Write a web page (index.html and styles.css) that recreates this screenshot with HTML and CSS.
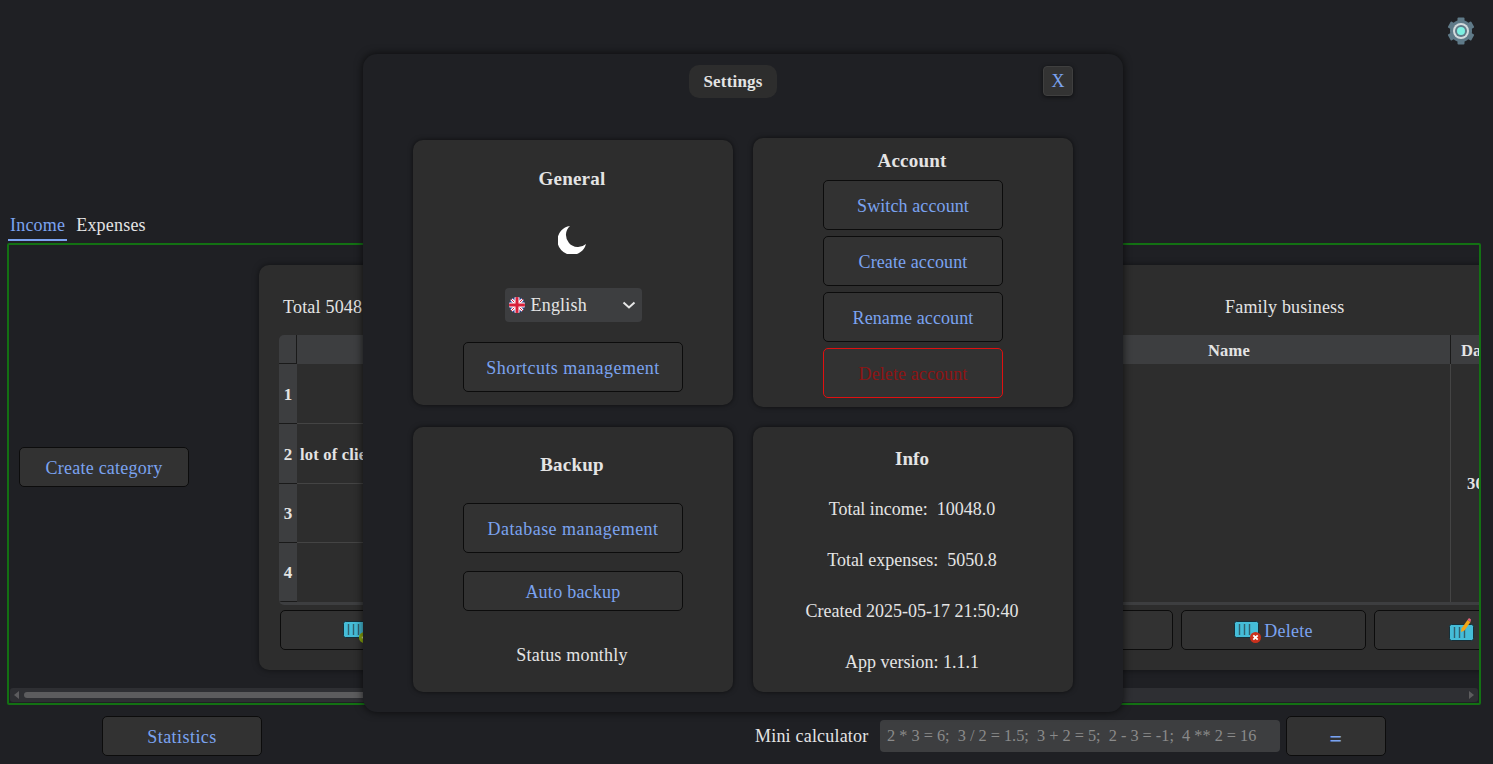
FILE: index.html
```html
<!DOCTYPE html>
<html lang="en">
<head>
  <meta charset="UTF-8" />
  <title>Finance | Settings</title>
  <link rel="stylesheet" href="styles.css">
</head>
<body>

  <svg width="0" height="0" class="defs">
    <symbol id="tbl" viewBox="0 0 25 17">
      <rect x="0.500" y="0.500" width="24" height="16" rx="2" fill="#45bdd8" stroke="#15303a"/>
      <path d="M5.500 3v11M10.500 3v11M15.500 3v11" stroke="#31606e" stroke-width="1.400"/>
    </symbol>
  </svg>

  <!-- Top -->
  <div class="top">
    <svg class="gear" viewBox="0 0 28 28">
      <g fill="#5f7a88">
        <circle cx="14" cy="14" r="11"/>
        <rect x="10.500" y="0.500" width="7" height="6" rx="1"/>
        <rect x="10.500" y="0.500" width="7" height="6" rx="1" transform="rotate(60 14 14)"/>
        <rect x="10.500" y="0.500" width="7" height="6" rx="1" transform="rotate(120 14 14)"/>
        <rect x="10.500" y="0.500" width="7" height="6" rx="1" transform="rotate(180 14 14)"/>
        <rect x="10.500" y="0.500" width="7" height="6" rx="1" transform="rotate(240 14 14)"/>
        <rect x="10.500" y="0.500" width="7" height="6" rx="1" transform="rotate(300 14 14)"/>
      </g>
      <circle cx="14" cy="14" r="8" fill="#d3dadd"/>
      <circle cx="14" cy="14" r="6" fill="#5f7a88"/>
      <circle cx="14" cy="14" r="4" fill="#7df0e2"/>
    </svg>
  </div>

  <!-- Tabs -->
  <div class="tabs">
    <span class="tab active">Income</span>
    <span class="tab">Expenses</span>
  </div>

  <!-- Main frame -->
  <div class="frame">
    <div class="frame-inner">
      <div class="side">
        <button class="btn create-btn">Create category</button>
      </div>
      <div class="card">
        <div class="card-head">
          <span class="total">Total 5048</span>
          <span class="card-name">Family business</span>
        </div>
        <div class="table">
          <div class="corner"></div>
          <div class="th">Description</div>
          <div class="th">Name</div>
          <div class="th th-date">Date</div>

          <div class="rowhead">1</div>
          <div class="td"></div>
          <div class="td td-name"></div>
          <div class="td td-date">30</div>

          <div class="rowhead">2</div>
          <div class="td td-left">lot of clients</div>

          <div class="rowhead">3</div>
          <div class="td"></div>

          <div class="rowhead">4</div>
          <div class="td last"></div>
        </div>
        <div class="actions">
          <button class="btn act act-add">
            <span class="ic"><svg width="25" height="17"><use href="#tbl"/></svg><svg class="badge" viewBox="0 0 10 10"><circle cx="5" cy="5" r="5" fill="#8aa80c"/><path d="M2.500 5h5" stroke="#dfe8a0" stroke-width="1.600"/></svg></span>
          </button>
          <button class="btn act act-mid"></button>
          <button class="btn act">
            <span class="ic"><svg width="25" height="17"><use href="#tbl"/></svg><svg class="badge" viewBox="0 0 10 10"><circle cx="5" cy="5" r="5" fill="#c9301c"/><path d="M3 3l4 4M7 3l-4 4" stroke="#fff" stroke-width="1.600"/></svg></span>
            Delete
          </button>
          <button class="btn act act-edit">
            <span class="ic ic-edit"><svg width="25" height="17"><use href="#tbl"/></svg><svg class="pencil" viewBox="0 0 11 15"><path d="M1 14l.5-3.500 6-8.500 3 2-6 8.500z" fill="#f2a516"/><path d="M7.500 2L9 0l2 1.500L10.500 4z" fill="#e8677a"/></svg></span>
          </button>
        </div>
      </div>
    </div>
    <div class="hscroll">
      <span class="arrow-left"></span>
      <div class="thumb"></div>
      <span class="arrow-right"></span>
    </div>
  </div>

  <!-- Bottom row -->
  <div class="bottom">
    <button class="btn stats-btn">Statistics</button>
    <div class="calc">
      <span class="calc-label">Mini calculator</span>
      <input class="calc-input" type="text" placeholder="2 * 3 = 6;  3 / 2 = 1.5;  3 + 2 = 5;  2 - 3 = -1;  4 ** 2 = 16">
      <button class="btn eq-btn">=</button>
    </div>
  </div>

  <!-- Settings modal -->
  <div class="modal">
    <div class="modal-head">
      <span class="modal-title">Settings</span>
      <button class="close-btn">X</button>
    </div>
    <div class="panels">
      <section class="panel panel-general">
        <h3>General</h3>
        <svg class="moon" viewBox="0 0 28 28"><path d="M12 0A14.500 14.500 0 1 0 28 18 12 12 0 0 1 12 0z" fill="#fff"/></svg>
        <div class="lang">
          <svg class="flag" viewBox="0 0 16 16">
            <defs><clipPath id="round"><circle cx="8" cy="8" r="8"/></clipPath></defs>
            <g clip-path="url(#round)">
              <rect width="16" height="16" fill="#2a3f8f"/>
              <path d="M0 0l16 16M16 0L0 16" stroke="#fff" stroke-width="3"/>
              <path d="M0 0l16 16M16 0L0 16" stroke="#d8203a" stroke-width="1"/>
              <path d="M8 0v16M0 8h16" stroke="#fff" stroke-width="5"/>
              <path d="M8 0v16M0 8h16" stroke="#d8203a" stroke-width="3"/>
            </g>
          </svg>
          <span>English</span>
          <svg class="chev" viewBox="0 0 14 8"><path d="M1.500 1.500L7 6.500l5.500-5" fill="none" stroke="#e6e6e6" stroke-width="2"/></svg>
        </div>
        <button class="btn wide tall">Shortcuts management</button>
      </section>

      <section class="panel panel-account">
        <h3>Account</h3>
        <button class="btn acc">Switch account</button>
        <button class="btn acc">Create account</button>
        <button class="btn acc">Rename account</button>
        <button class="btn acc danger">Delete account</button>
      </section>

      <section class="panel panel-backup">
        <h3>Backup</h3>
        <button class="btn wide tall">Database management</button>
        <button class="btn wide auto">Auto backup</button>
        <p class="status">Status monthly</p>
      </section>

      <section class="panel panel-info">
        <h3>Info</h3>
        <p>Total income:&nbsp; 10048.0</p>
        <p>Total expenses:&nbsp; 5050.8</p>
        <p>Created 2025-05-17 21:50:40</p>
        <p>App version: 1.1.1</p>
      </section>
    </div>
  </div>

</body>
</html>
```

FILE: styles.css
```css
* {
  box-sizing: border-box;
}

html, body {
  height: 100%;
}

body {
  margin: 0;
  padding: 0 12px 0 8px;
  background: #1f2024;
  color: #e4e4e4;
  font-family: "Liberation Serif", serif;
  font-size: 18px;
  letter-spacing: 0.2px;
  overflow: hidden;
  position: relative;
}

.defs {
  position: absolute;
}

/* Top */
.top {
  height: 216px;
  display: flex;
  justify-content: flex-end;
  padding: 17px 6px 0 0;
}

.gear {
  width: 28px;
  height: 28px;
}

/* Tabs */
.tabs {
  display: flex;
  height: 25px;
  gap: 7px;
}

.tab {
  padding: 0 2px;
  height: 25px;
  line-height: 19px;
}

.tab.active {
  color: #7ba3f0;
  border-bottom: 2px solid #7ba3f0;
}

/* Frame */
.frame {
  margin: 2px 0 0 -1px;
  height: 462px;
  border: 2px solid #137113;
  border-radius: 2px;
  display: flex;
  flex-direction: column;
  overflow: hidden;
}

.frame-inner {
  flex: 1;
  display: flex;
  overflow: hidden;
  min-height: 0;
}

.side {
  width: 250px;
  flex: none;
  display: flex;
  align-items: center;
  padding: 1px 0 0 10px;
}

.btn {
  background: #323232;
  color: #7ba3f0;
  border: 1px solid #0c0c0c;
  border-radius: 5px;
  font-family: inherit;
  font-size: 18px;
  letter-spacing: 0.25px;
  padding: 2px 0 0;
}

.create-btn {
  width: 170px;
  height: 40px;
}

.card {
  flex: none;
  width: 1400px;
  height: 405px;
  margin-top: 20px;
  background: #2d2d2d;
  border-radius: 10px;
  box-shadow: 0 0 6px rgba(0, 0, 0, 0.5);
  padding: 0 20px;
}

.card-head {
  height: 70px;
  display: flex;
  align-items: center;
  padding: 14px 0 0 4px;
}

.total {
  width: 942px;
}

.table {
  display: grid;
  grid-template-columns: 18px 711px 442px 120px;
  grid-template-rows: 29px 60px 60px 59px 59px;
  border-radius: 5px;
  overflow: hidden;
  border-bottom: 3px solid #3d3e40;
}

.corner, .th {
  background: #3d3e40;
  font-weight: bold;
  font-size: 16.5px;
  padding-top: 2px;
  display: flex;
  align-items: center;
  justify-content: center;
}

.corner {
  border-right: 1px solid #1a1a1a;
  border-bottom: 1px solid #1a1a1a;
}

.th-date {
  border-left: 1px solid #1a1a1a;
  justify-content: flex-start;
  padding-left: 10px;
}

.rowhead {
  background: #3d3e40;
  border-bottom: 1px solid #1a1a1a;
  padding-top: 2px;
  display: flex;
  align-items: center;
  justify-content: center;
  font-weight: bold;
  font-size: 17px;
}

.td {
  border-bottom: 1px solid #444;
  padding-top: 2px;
  display: flex;
  align-items: center;
  justify-content: center;
  font-weight: bold;
  font-size: 16.5px;
}

.td.last {
  border-bottom: none;
}

.td-left {
  justify-content: flex-start;
  padding-left: 3px;
}

.td-name {
  grid-column: 3;
  grid-row: 2 / 6;
  border-bottom: none;
}

.td-date {
  grid-column: 4;
  grid-row: 2 / 6;
  border-left: 1px solid #444;
  border-bottom: none;
  justify-content: flex-start;
  padding-left: 16px;
}

.actions {
  display: flex;
  gap: 8px;
  margin-top: 5px;
  padding-left: 1px;
}

.act {
  width: 185px;
  height: 40px;
  flex: none;
  display: flex;
  align-items: center;
  justify-content: center;
  gap: 5px;
}

.act-add {
  justify-content: flex-start;
  padding-left: 62px;
}

.act-mid {
  width: 700px;
}

.act-edit {
  width: 200px;
  justify-content: flex-start;
  padding-left: 74px;
}

.ic {
  position: relative;
  display: inline-flex;
  width: 25px;
  height: 17px;
  margin-top: -3px;
}

.ic-edit {
  margin-top: 3px;
}

.badge {
  position: absolute;
  right: -2px;
  bottom: -5px;
  width: 11px;
  height: 11px;
}

.pencil {
  position: absolute;
  left: 11px;
  top: -6px;
  width: 11px;
  height: 15px;
}

/* Scrollbar */
.hscroll {
  height: 14px;
  margin: 0 1px 1px 1px;
  background: #2e2f33;
  border-radius: 3px;
  display: flex;
  align-items: center;
  gap: 5px;
  padding: 0 4px;
  flex: none;
}

.thumb {
  flex: 1;
  height: 6px;
  border-radius: 3px;
  background: #5c5c5e;
  margin-right: 400px;
}

.arrow-left {
  border-right: 5px solid #5c5c5e;
  border-top: 4px solid transparent;
  border-bottom: 4px solid transparent;
}

.arrow-right {
  border-left: 5px solid #5c5c5e;
  border-top: 4px solid transparent;
  border-bottom: 4px solid transparent;
}

/* Bottom */
.bottom {
  display: flex;
  align-items: center;
  height: 40px;
  margin-top: 11px;
  padding-left: 94px;
}

.stats-btn {
  width: 160px;
  height: 40px;
  letter-spacing: 0.45px;
}

.calc {
  margin-left: 493px;
  display: flex;
  align-items: center;
}

.calc-label {
  width: 125px;
}

.calc-input {
  width: 400px;
  height: 32px;
  background: #3d3e40;
  border: none;
  border-radius: 4px;
  color: #e4e4e4;
  font-family: inherit;
  font-size: 16.3px;
  letter-spacing: 0;
  padding: 0 7px;
}

.calc-input::placeholder {
  color: #8a8a8a;
}

.eq-btn {
  width: 100px;
  height: 40px;
  margin-left: 6px;
  padding-top: 6px;
  font-size: 22px;
  font-weight: bold;
}

/* Modal */
.modal {
  position: absolute;
  left: 363px;
  top: 54px;
  width: 760px;
  height: 658px;
  background: #1f2024;
  border-radius: 14px;
  box-shadow: 0 0 8px rgba(0, 0, 0, 0.7);
  padding: 11px 50px 0;
}

.modal-head {
  height: 73px;
  display: flex;
  position: relative;
  padding-left: 276px;
}

.modal-title {
  width: 88px;
  height: 33px;
  background: #2d2d2d;
  border-radius: 10px;
  font-weight: bold;
  font-size: 17px;
  display: flex;
  align-items: center;
  justify-content: center;
}

.close-btn {
  position: absolute;
  right: 0;
  top: 1px;
  width: 30px;
  height: 30px;
  background: #333;
  color: #7ba3f0;
  border: 1px solid #3f3f3f;
  border-radius: 4px;
  font-family: inherit;
  font-size: 18px;
  padding: 0;
  box-shadow: 0 1px 4px rgba(0, 0, 0, 0.6);
}

.panels {
  display: grid;
  grid-template-columns: 320px 320px;
  grid-template-rows: 269px 265px;
  gap: 20px;
  align-items: center;
}

.panel {
  background: #2d2d2d;
  border-radius: 10px;
  box-shadow: 0 0 5px rgba(0, 0, 0, 0.6);
  height: 265px;
  display: flex;
  flex-direction: column;
  align-items: center;
  padding-top: 28px;
}

.panel h3 {
  margin: 0;
  padding-right: 2px;
  font-size: 19px;
  line-height: 20px;
}

.panel-general {
  padding-top: 29px;
}

.moon {
  width: 28px;
  height: 28px;
  margin: 37px 2px 0 0;
}

.lang {
  width: 137px;
  height: 34px;
  margin-top: 34px;
  background: #3d3e40;
  border-radius: 4px;
  display: flex;
  align-items: center;
  padding: 0 5px 0 4px;
  gap: 6px;
}

.flag {
  width: 16px;
  height: 16px;
}

.chev {
  width: 14px;
  height: 8px;
  margin-left: auto;
  margin-right: 1px;
}

.wide {
  width: 220px;
}

.tall {
  height: 50px;
  flex: none;
  letter-spacing: 0.45px;
}

.panel .tall {
  margin-top: 20px;
}

.panel-account {
  height: 269px;
  padding-top: 13px;
}

.acc {
  width: 180px;
  height: 50px;
  flex: none;
  margin-bottom: 6px;
  letter-spacing: 0.1px;
}

.panel-account h3 {
  margin-bottom: 9px;
}

.danger {
  color: #8e1414;
  border-color: #e01010;
  margin-bottom: 0;
}

.panel-backup .tall {
  margin-top: 28px;
}

.auto {
  height: 40px;
  margin-top: 18px;
}

.status {
  margin: 34px 2px 0 0;
  line-height: 20px;
}

.panel-info {
  padding-top: 22px;
  letter-spacing: 0;
}

.panel-info p {
  margin: 31px 2px 0 0;
  line-height: 20px;
}

.panel-info h3 + p {
  margin-top: 30px;
}
```
